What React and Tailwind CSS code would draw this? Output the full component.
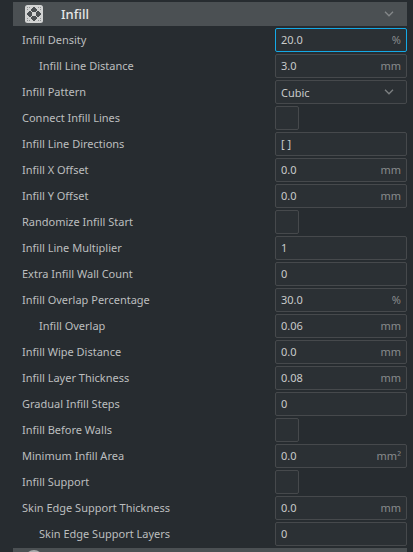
import React from "react";

const settings = [
  { label: "Infill Density", value: "20.0", unit: "%", active: true },
  { label: "Infill Line Distance", value: "3.0", unit: "mm", child: true },
  { label: "Infill Pattern", type: "select", value: "Cubic" },
  { label: "Connect Infill Lines", type: "check" },
  { label: "Infill Line Directions", value: "[ ]" },
  { label: "Infill X Offset", value: "0.0", unit: "mm" },
  { label: "Infill Y Offset", value: "0.0", unit: "mm" },
  { label: "Randomize Infill Start", type: "check" },
  { label: "Infill Line Multiplier", value: "1" },
  { label: "Extra Infill Wall Count", value: "0" },
  { label: "Infill Overlap Percentage", value: "30.0", unit: "%" },
  { label: "Infill Overlap", value: "0.06", unit: "mm", child: true },
  { label: "Infill Wipe Distance", value: "0.0", unit: "mm" },
  { label: "Infill Layer Thickness", value: "0.08", unit: "mm" },
  { label: "Gradual Infill Steps", value: "0" },
  { label: "Infill Before Walls", type: "check" },
  { label: "Minimum Infill Area", value: "0.0", unit: "mm²" },
  { label: "Infill Support", type: "check" },
  { label: "Skin Edge Support Thickness", value: "0.0", unit: "mm" },
  { label: "Skin Edge Support Layers", value: "0", child: true },
];

function Chevron({ className }) {
  return (
    <svg className={className} width="10" height="6" viewBox="0 0 10 6" fill="none" stroke="currentColor" strokeWidth="1.3" aria-hidden="true">
      <path d="M1 0.8 5 4.8 9 0.8" />
    </svg>
  );
}

function InfillIcon() {
  return (
    <svg width="18" height="18" viewBox="0 0 18 18" aria-hidden="true">
      <rect width="18" height="18" rx="2.5" fill="#d2d3d3" />
      <g fill="#4b5053">
        <path d="M8 2h2v1h1v1h1v2h-1v1H7V6H6V4h1V3h1Z" />
        <path d="M8 16h2v-1h1v-1h1v-2h-1v-1H7v1H6v2h1v1h1Z" />
        <path d="M2 8h1V7h1V6h2v1h1v4H6v1H4v-1H3v-1H2Z" />
        <path d="M16 8h-1V7h-1V6h-2v1h-1v4h1v1h2v-1h1v-1h1Z" />
      </g>
      <g fill="#4b5053" opacity="0.5">
        <path d="M2 2h1v1H2ZM4 2h1v1H4ZM2 4h1v1H2ZM15 2h1v1h-1ZM13 2h1v1h-1ZM15 4h1v1h-1Z" />
        <path d="M2 15h1v1H2ZM4 15h1v1H4ZM2 13h1v1H2ZM15 15h1v1h-1ZM13 15h1v1h-1ZM15 13h1v1h-1Z" />
      </g>
    </svg>
  );
}

function Control({ item, id }) {
  if (item.type === "check") {
    return (
      <input
        id={id}
        type="checkbox"
        className="block size-6 appearance-none rounded-xs border border-[#46494c] bg-[#2b3034] checked:bg-[#14a9e6]"
      />
    );
  }
  if (item.type === "select") {
    return (
      <div className="relative">
        <select
          id={id}
          defaultValue={item.value}
          className="block h-6 w-full appearance-none rounded-xs border border-[#46494c] bg-[#2b3034] pt-px pl-[5px] text-[#c8caca] outline-none"
        >
          <option>{item.value}</option>
        </select>
        <Chevron className="pointer-events-none absolute top-[9px] right-[13px] text-[#7d8082]" />
      </div>
    );
  }
  return (
    <div
      className={`flex h-6 items-center rounded-xs border bg-[#2b3034] px-[5px] ${
        item.active ? "border-[#14a9e6]" : "border-[#46494c]"
      }`}
    >
      <input id={id} type="text" defaultValue={item.value} className="min-w-0 flex-1 bg-transparent text-[#c8caca] outline-none" />
      {item.unit && <span className="text-[#888b8d]">{item.unit}</span>}
    </div>
  );
}

export default function App() {
  return (
    <main className="h-screen overflow-hidden bg-[#272c30] pt-0.5 pr-1.5 pl-[13px] font-['Noto_Sans',sans-serif] text-[11px] leading-4 text-[#bcbebf]">
      <button type="button" className="flex h-6 w-full items-center bg-[#4b5053] pr-[13px] pl-3 text-left">
        <InfillIcon />
        <span className="ml-[18px] flex-1 text-[13px] font-medium text-[#e6e7e7]">Infill</span>
        <Chevron className="text-[#85888a]" />
      </button>
      <div className="flex flex-col gap-0.5 py-0.5">
        {settings.map((item, i) => (
          <div key={item.label} className="flex h-6 items-center">
            <label htmlFor={`setting-${i}`} className={`flex-1 ${item.child ? "pl-[26px]" : "pl-[9px]"}`}>
              {item.label}
            </label>
            <div className="w-[132px]">
              <Control item={item} id={`setting-${i}`} />
            </div>
          </div>
        ))}
      </div>
      <div className="flex h-6 bg-[#4b5053] pt-0.5 pl-3">
        <svg width="18" height="18" viewBox="0 0 18 18" aria-hidden="true">
          <circle cx="9" cy="9" r="9" fill="#a9abac" />
        </svg>
      </div>
    </main>
  );
}
